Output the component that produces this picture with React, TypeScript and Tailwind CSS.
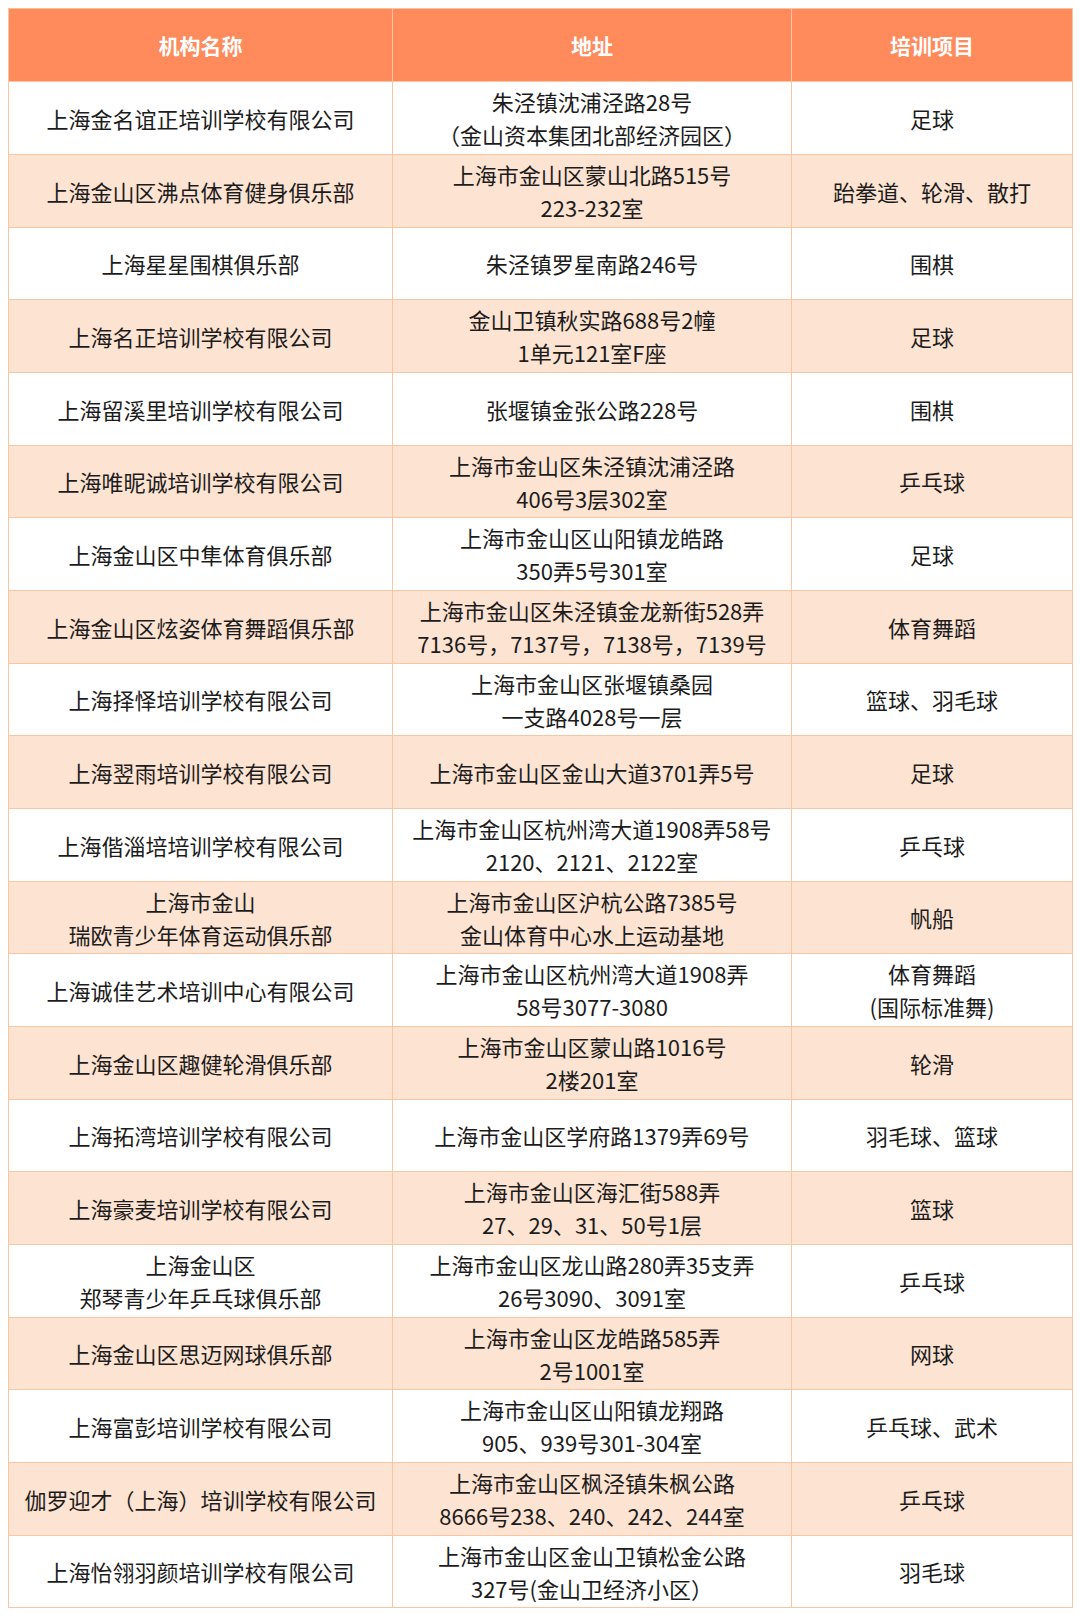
const rows: [string, string, string][] = [
  ['上海金名谊正培训学校有限公司', '朱泾镇沈浦泾路28号\n（金山资本集团北部经济园区）', '足球'],
  ['上海金山区沸点体育健身俱乐部', '上海市金山区蒙山北路515号\n223-232室', '跆拳道、轮滑、散打'],
  ['上海星星围棋俱乐部', '朱泾镇罗星南路246号', '围棋'],
  ['上海名正培训学校有限公司', '金山卫镇秋实路688号2幢\n1单元121室F座', '足球'],
  ['上海留溪里培训学校有限公司', '张堰镇金张公路228号', '围棋'],
  ['上海唯昵诚培训学校有限公司', '上海市金山区朱泾镇沈浦泾路\n406号3层302室', '乒乓球'],
  ['上海金山区中隼体育俱乐部', '上海市金山区山阳镇龙皓路\n350弄5号301室', '足球'],
  ['上海金山区炫姿体育舞蹈俱乐部', '上海市金山区朱泾镇金龙新街528弄\n7136号，7137号，7138号，7139号', '体育舞蹈'],
  ['上海择怿培训学校有限公司', '上海市金山区张堰镇桑园\n一支路4028号一层', '篮球、羽毛球'],
  ['上海翌雨培训学校有限公司', '上海市金山区金山大道3701弄5号', '足球'],
  ['上海偕淄培培训学校有限公司', '上海市金山区杭州湾大道1908弄58号\n2120、2121、2122室', '乒乓球'],
  ['上海市金山\n瑞欧青少年体育运动俱乐部', '上海市金山区沪杭公路7385号\n金山体育中心水上运动基地', '帆船'],
  ['上海诚佳艺术培训中心有限公司', '上海市金山区杭州湾大道1908弄\n58号3077-3080', '体育舞蹈\n(国际标准舞)'],
  ['上海金山区趣健轮滑俱乐部', '上海市金山区蒙山路1016号\n2楼201室', '轮滑'],
  ['上海拓湾培训学校有限公司', '上海市金山区学府路1379弄69号', '羽毛球、篮球'],
  ['上海豪麦培训学校有限公司', '上海市金山区海汇街588弄\n27、29、31、50号1层', '篮球'],
  ['上海金山区\n郑琴青少年乒乓球俱乐部', '上海市金山区龙山路280弄35支弄\n26号3090、3091室', '乒乓球'],
  ['上海金山区思迈网球俱乐部', '上海市金山区龙皓路585弄\n2号1001室', '网球'],
  ['上海富彭培训学校有限公司', '上海市金山区山阳镇龙翔路\n905、939号301-304室', '乒乓球、武术'],
  ['伽罗迎才（上海）培训学校有限公司', '上海市金山区枫泾镇朱枫公路\n8666号238、240、242、244室', '乒乓球'],
  ['上海怡翎羽颜培训学校有限公司', '上海市金山区金山卫镇松金公路\n327号(金山卫经济小区）', '羽毛球'],
];

const font = { fontFamily: '"Noto Sans CJK SC", "Noto Sans", sans-serif' };

function Cell({ text }: { text: string }) {
  return (
    <td className="border border-[#f8c6a2] px-2 text-center align-middle">
      {text.split('\n').map((line, i) => (
        <div key={i}>{line}</div>
      ))}
    </td>
  );
}

export default function App() {
  return (
    <div className="bg-white pt-[8px] pl-[8px] [text-spacing-trim:space-all]" style={font}>
      <table className="w-[1064px] table-fixed border-collapse text-[22px] leading-[33px] text-[#1c1c1c]">
        <colgroup>
          <col className="w-[384px]" />
          <col className="w-[399px]" />
          <col className="w-[281px]" />
        </colgroup>
        <thead>
          <tr className="h-[73px] bg-[#ff8a5b] text-[21px] font-bold text-white">
            <th className="border border-[#f8c6a2] border-t-[#f4c08e]">机构名称</th>
            <th className="border border-[#f8c6a2]">地址</th>
            <th className="border border-[#f8c6a2]">培训项目</th>
          </tr>
        </thead>
        <tbody>
          {rows.map((r, idx) => (
            <tr
              key={idx}
              className={`${idx % 3 === 2 ? 'h-[72px]' : 'h-[73px]'} ${idx % 2 === 1 ? 'bg-[#fde3d2]' : 'bg-white'}`}
            >
              <Cell text={r[0]} />
              <Cell text={r[1]} />
              <Cell text={r[2]} />
            </tr>
          ))}
        </tbody>
      </table>
    </div>
  );
}
